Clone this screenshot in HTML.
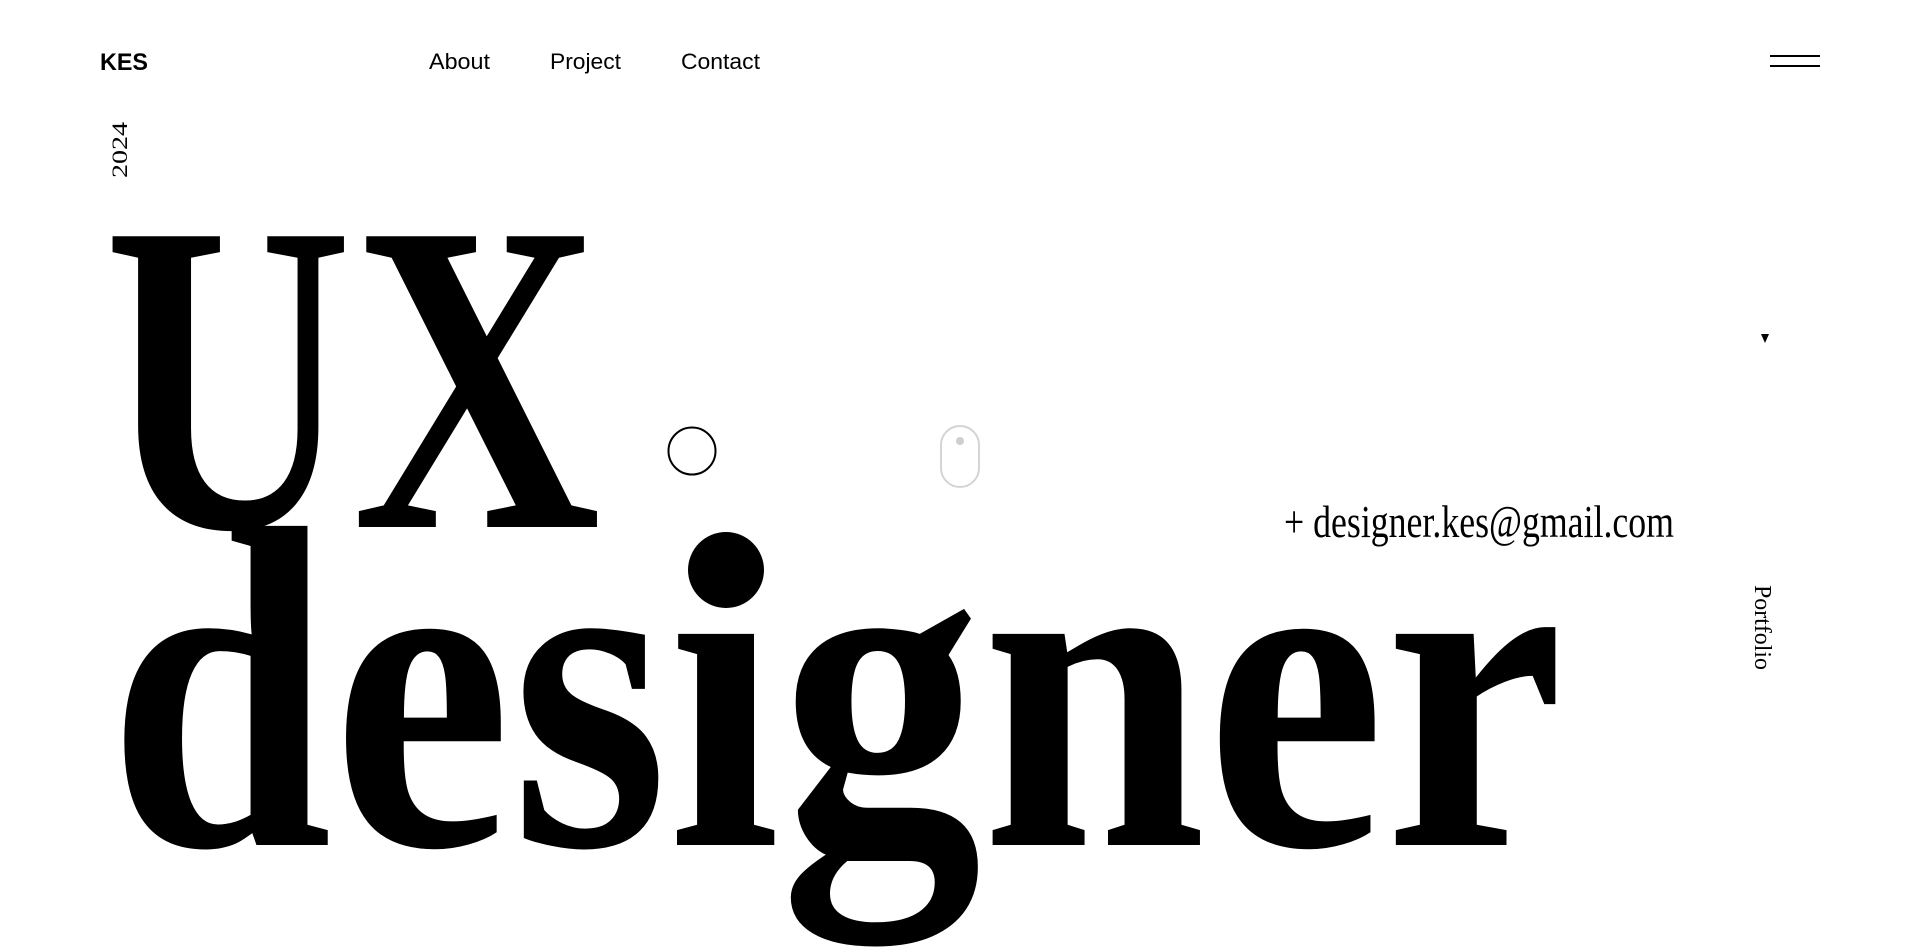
<!DOCTYPE html>
<html><head><meta charset="utf-8"><style>
html,body{margin:0;padding:0;background:#fff;width:1920px;height:948px;overflow:hidden}
svg{display:block}
</style></head><body>
<svg width="1920" height="948" viewBox="0 0 1920 948" xmlns="http://www.w3.org/2000/svg">
<g font-family="'Liberation Sans', sans-serif" fill="#000">
<text x="100" y="70" font-size="24" font-weight="bold" textLength="48" lengthAdjust="spacingAndGlyphs">KES</text>
<text x="429" y="69" font-size="22" textLength="61" lengthAdjust="spacingAndGlyphs">About</text>
<text x="550" y="69" font-size="22" textLength="71" lengthAdjust="spacingAndGlyphs">Project</text>
<text x="681" y="69" font-size="22" textLength="79" lengthAdjust="spacingAndGlyphs">Contact</text>
</g>
<rect x="1770" y="55" width="50" height="2" fill="#000"/>
<rect x="1770" y="65" width="50" height="2" fill="#000"/>
<g font-family="'Liberation Serif', serif" fill="#000">
<text transform="translate(127,178) rotate(-90)" font-size="22" textLength="56" lengthAdjust="spacingAndGlyphs">2024</text>
<text transform="translate(1755,585) rotate(90)" font-size="24" textLength="85" lengthAdjust="spacingAndGlyphs">Portfolio</text>
<text x="1284" y="537" font-size="46" textLength="390" lengthAdjust="spacingAndGlyphs">+ designer.kes@gmail.com</text>
<text x="104" y="527" font-size="444" font-weight="bold" textLength="497" lengthAdjust="spacingAndGlyphs">UX</text>
<text x="108" y="845" font-size="460" font-weight="bold" textLength="1456" lengthAdjust="spacingAndGlyphs">desıgner</text>
</g>
<polygon points="1761,334 1769,334 1765,343" fill="#000"/>
<circle cx="692" cy="451" r="23.5" fill="none" stroke="#000" stroke-width="2"/>
<circle cx="726" cy="570" r="38" fill="#000"/>
<rect x="941" y="426" width="38" height="61" rx="19" fill="none" stroke="#d4d4d4" stroke-width="2"/>
<circle cx="960" cy="441" r="4" fill="#cfcfcf"/>
</svg>
</body></html>
